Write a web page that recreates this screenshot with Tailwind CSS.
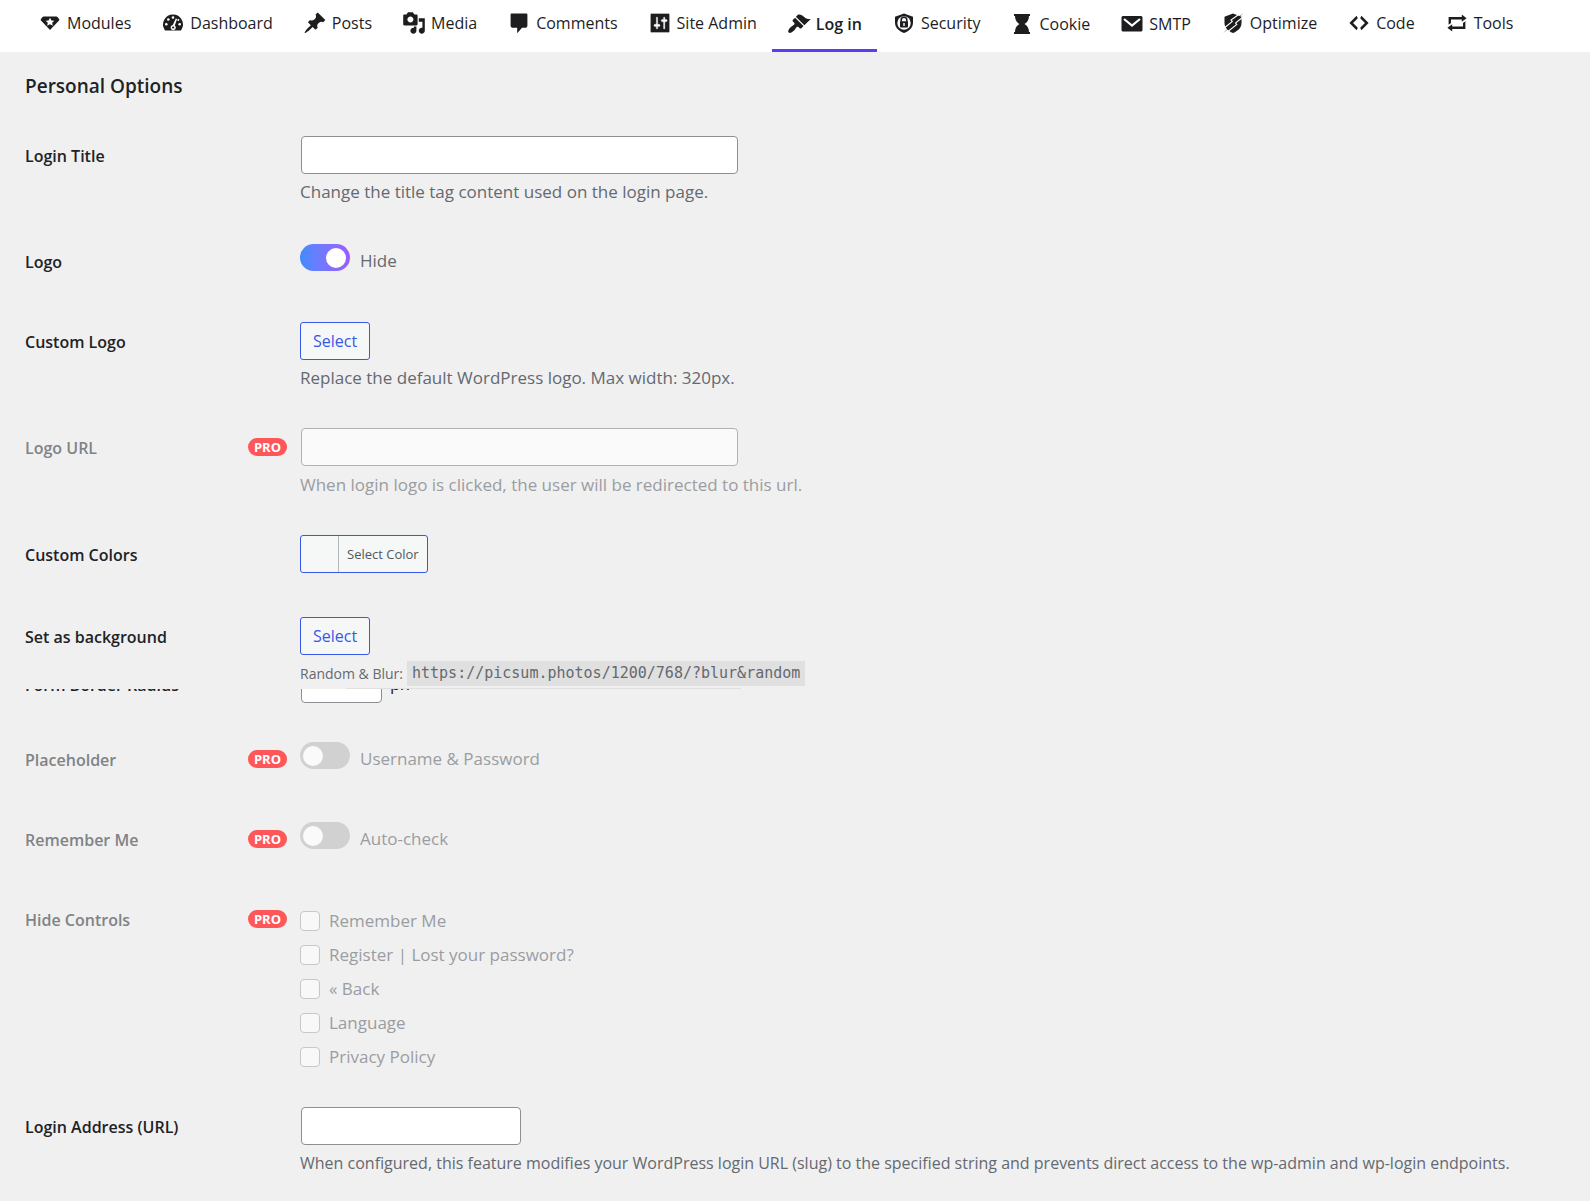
<!DOCTYPE html>
<html lang="en">
<head>
  <meta charset="UTF-8">
  <meta name="viewport" content="width=device-width, initial-scale=1">
  <title>Login Settings</title>
  <script src="https://cdn.jsdelivr.net/npm/@tailwindcss/browser@4"></script>
  <style>
    body { font-family: "Segoe UI", "Open Sans", "Noto Sans", sans-serif; }
    code { font-family: Consolas, "DejaVu Sans Mono", monospace; }
  </style>
</head>
<body class="min-h-screen bg-[#f0f0f0] text-[#1d2327]">

  <!-- Tabs -->
  <nav class="flex h-[52px] bg-white pl-[23px] text-base whitespace-nowrap text-[#1d1d1f]">
    <a href="#modules" class="flex items-center gap-[5px] px-[15px] pb-1.5">
      <svg class="size-6" viewBox="0 0 24 24" fill="currentColor" fill-rule="evenodd"><path d="M5.500 5.500h13q1.500 0 3 3.500L12 19 2.500 9q1.500-3.500 3-3.500zM12 6.800l-1.400 2.600-2.900.4 2.100 2-.6 2.900 2.800-1.400 2.800 1.400-.6-2.900 2.100-2-2.900-.4z"/></svg>
      Modules
    </a>
    <a href="#dashboard" class="flex items-center gap-[5px] px-[15px] pb-1.5">
      <svg class="size-6" viewBox="0 0 24 24" fill="currentColor"><path d="M12 3.500A10 10 0 0 0 3.700 19q.3.500 1 .5h14.600q.7 0 1-.5A10 10 0 0 0 12 3.500z"/><g fill="#fff"><circle cx="12" cy="6.500" r="1.300"/><circle cx="7.300" cy="8.500" r="1.300"/><circle cx="5.300" cy="13.300" r="1.300"/><circle cx="18.700" cy="13.300" r="1.300"/><circle cx="17.300" cy="9" r="1"/><path d="M14.800 7.500l1.300.5-2.300 6.500a2.600 2.600 0 1 1-2-.5z"/></g><circle cx="12.200" cy="16.500" r="1.100"/></svg>
      Dashboard
    </a>
    <a href="#posts" class="flex items-center gap-[5px] px-[15px] pb-1.5">
      <svg class="size-6" viewBox="0 0 20 20" fill="currentColor"><path d="M10.440 3.020l1.820-1.820 6.360 6.350-1.830 1.820c-1.050-.68-2.480-.57-3.410.36l-.75.75c-.92.93-1.040 2.350-.35 3.410l-1.830 1.820-2.410-2.410-2.800 2.790c-.42.42-3.380 2.710-3.800 2.290s1.860-3.390 2.280-3.810l2.790-2.790L4.100 9.360l1.830-1.820c1.050.69 2.480.57 3.400-.36l.75-.75c.93-.92 1.050-2.350.36-3.410z"/></svg>
      Posts
    </a>
    <a href="#media" class="flex items-center gap-[5px] px-[15px] pb-1.5">
      <svg class="size-6" viewBox="0 0 20 20" fill="currentColor"><path d="M13 11V4c0-.55-.45-1-1-1h-1.670L9 1H5L3.670 3H2c-.55 0-1 .45-1 1v7c0 .55.45 1 1 1h10c.55 0 1-.45 1-1zM7 4.500c1.380 0 2.500 1.120 2.500 2.500S8.380 9.500 7 9.500 4.500 8.380 4.500 7 5.620 4.500 7 4.500zM14 6h5v10.500c0 1.380-1.120 2.500-2.500 2.500S14 17.880 14 16.500s1.120-2.500 2.500-2.500c.17 0 .34.02.5.05V9h-3V6zm-4 8.050V13h2v3.500c0 1.380-1.120 2.500-2.500 2.500S7 17.880 7 16.500 8.120 14 9.500 14c.17 0 .34.02.5.05z"/></svg>
      Media
    </a>
    <a href="#comments" class="flex items-center gap-[5px] px-[15px] pb-1.5">
      <svg class="size-6" viewBox="0 0 20 20" fill="currentColor"><path d="M4 2h12c.55 0 1 .45 1 1v9c0 1.100-.9 2-2 2h-2.500l-4 4.500V14H5c-1.100 0-2-.9-2-2V3c0-.55.45-1 1-1z"/></svg>
      Comments
    </a>
    <a href="#site-admin" class="flex items-center gap-[5px] px-[15px] pb-1.5">
      <svg class="size-6" viewBox="0 0 20 20" fill="currentColor"><path d="M18 17V3c0-.55-.45-1-1-1H3c-.55 0-1 .45-1 1v14c0 .55.45 1 1 1h14c.55 0 1-.45 1-1zM8 11h1c.55 0 1 .45 1 1s-.45 1-1 1H8v1.500c0 .28-.22.5-.5.5s-.5-.22-.5-.5V13H6c-.55 0-1-.45-1-1s.45-1 1-1h1V5.500c0-.28.22-.5.5-.5s.5.22.5.5V11zm5-2h-1c-.55 0-1-.45-1-1s.45-1 1-1h1V5.500c0-.28.22-.5.5-.5s.5.22.5.5V7h1c.55 0 1 .45 1 1s-.45 1-1 1h-1v5.500c0 .28-.22.5-.5.5s-.5-.22-.5-.5V9z" stroke="#fff" stroke-width=".3"/></svg>
      Site Admin
    </a>
    <a href="#login" class="flex items-center gap-[5px] border-b-[3px] border-[#5b3df5] px-[15px] pb-px font-semibold">
      <svg class="size-6" viewBox="0 0 20 20" fill="currentColor"><path d="M14.480 11.060L7.410 3.990l1.500-1.500c.5-.56 2.300-.47 3.510.32 1.210.8 1.430 1.280 2.910 2.100 1.180.64 2.450 1.260 4.450.85zm-.71.71L6.700 4.700 4.930 6.470c-.39.39-.39 1.020 0 1.410l1.060 1.060c.39.39.39 1.030 0 1.420-.6.6-1.430 1.110-2.210 1.690-.35.26-.7.53-1.010.84C1.430 14.230.4 16.080 1.400 17.070c.99 1 2.840-.03 4.180-1.360.31-.31.58-.66.85-1.020.57-.78 1.080-1.610 1.690-2.210.39-.39 1.020-.39 1.410 0l1.060 1.060c.39.39 1.020.39 1.410 0z"/></svg>
      Log in
    </a>
    <a href="#security" class="flex items-center gap-[5px] px-[15px] pb-1.5">
      <svg class="size-6" viewBox="0 0 24 24" fill="currentColor"><path d="M12 2.500l9 3.200v5.800c0 5-3.600 8.500-9 10.500-5.400-2-9-5.500-9-10.500V5.700z"/><circle cx="12" cy="12" r="6.700" fill="#fff"/><path d="M9.200 10.500V9a2.800 2.800 0 0 1 5.600 0v1.500" fill="none" stroke="currentColor" stroke-width="1.600"/><path d="M8 10.300h8v5.200q0 1-1 1H9q-1 0-1-1z"/><path d="M11.300 12h1.400v3h-1.400z" fill="#fff"/></svg>
      Security
    </a>
    <a href="#cookie" class="flex items-center gap-[5px] px-[15px] pb-1">
      <svg class="size-6" viewBox="0 0 24 24" fill="currentColor"><path d="M4 2h16v2H4zM5 4h14c0 4-2 6.500-4.500 8 2.500 1.500 4.500 4 4.500 8H5c0-4 2-6.500 4.500-8C7 10.500 5 8 5 4zM4 20h16v2H4z"/></svg>
      Cookie
    </a>
    <a href="#smtp" class="flex items-center gap-[5px] px-[15px] pb-1">
      <svg class="size-6" viewBox="0 0 24 24"><rect x="1.500" y="4" width="21" height="15.500" rx="1.500" fill="currentColor"/><path d="M4 7l8 6.500L20 7" fill="none" stroke="#fff" stroke-width="2.200"/></svg>
      SMTP
    </a>
    <a href="#optimize" class="flex items-center gap-[5px] px-[15px] pb-1.5">
      <svg class="size-6" viewBox="0 0 24 24"><path d="M12 2.500l8.500 3.200v6c0 4.500-3 8-8.500 10.300-5.500-2.300-8.500-5.800-8.500-10.300v-6z" fill="currentColor"/><g fill="none" stroke="#fff" stroke-width="1.100"><path d="M19 2.500l-9 6.500 1.300 1.500L2 18"/><path d="M22 6l-7.500 6 1.300 1.500L5 22"/></g><path d="M22.500 2l-9.500 7.300 1.500 1.500L2 22l11-8.500-1.500-1.500z" fill="currentColor"/></svg>
      Optimize
    </a>
    <a href="#code" class="flex items-center gap-[5px] px-[15px] pb-1.5">
      <svg class="size-6" viewBox="0 0 20 20" fill="currentColor"><path d="M9 6l-4 4 4 4-1 2-6-6 6-6zm2 8l4-4-4-4 1-2 6 6-6 6z"/></svg>
      Code
    </a>
    <a href="#tools" class="flex items-center gap-[5px] px-[15px] pb-1.5">
      <svg class="size-6" viewBox="0 0 20 20" fill="currentColor"><path d="M5 7v3l-2 1.500V5h11V3l4 3.010L14 9V7H5zm10 6v-3l2-1.500V15H6v2l-4-3.010L6 11v2h9z"/></svg>
      Tools
    </a>
  </nav>

  <form class="text-[17px] leading-6">
    <section class="px-[25px] pt-5">
      <h2 class="mb-[36px] text-[19px] leading-7 font-semibold">Personal Options</h2>

      <div class="grid grid-cols-[275px_1fr] pb-[38px]">
        <label for="login-title" class="pt-2 text-base font-semibold">Login Title</label>
        <div>
          <input id="login-title" type="text" class="ml-px block h-[38px] w-[437px] rounded border border-[#8c8f94] bg-white px-2">
          <p class="mt-1.5 text-[#646970]">Change the title tag content used on the login page.</p>
        </div>
      </div>

      <div class="grid grid-cols-[275px_1fr] pb-[38px]">
        <label for="hide-logo" class="pt-2 text-base font-semibold">Logo</label>
        <div class="flex h-[42px] gap-2.5 pt-0.5">
          <input id="hide-logo" type="checkbox" checked class="h-[27px] w-[50px] appearance-none rounded-full bg-linear-to-r from-[#3d8bff] to-[#9a5cff] before:mt-[4px] before:ml-[26px] before:block before:size-5 before:rounded-full before:bg-white before:content-['']">
          <label for="hide-logo" class="pt-[5px] text-[#646970]">Hide</label>
        </div>
      </div>

      <div class="grid grid-cols-[275px_1fr] pb-[38px]">
        <span class="pt-2 text-base font-semibold">Custom Logo</span>
        <div>
          <button type="button" class="block h-[38px] rounded-[3px] border border-[#3858e9] bg-[#f6f7f7] px-3 text-base text-[#3858e9]">Select</button>
          <p class="mt-1.5 text-[#646970]">Replace the default WordPress logo. Max width: 320px.</p>
        </div>
      </div>

      <div class="grid grid-cols-[275px_1fr] pb-[38px]">
        <div class="flex justify-between pr-[13px]">
          <label for="logo-url" class="pt-2 text-base font-semibold text-[#808386]">Logo URL</label>
          <span class="mt-2.5 h-[18px] rounded-full bg-[#ff5757] px-1.5 text-[13px] leading-[18px] font-bold text-white">PRO</span>
        </div>
        <div>
          <input id="logo-url" type="text" disabled class="ml-px block h-[38px] w-[437px] rounded border border-[#b0b2b5] bg-[#fafafa] px-2">
          <p class="mt-[7px] text-[#9a9da1]">When login logo is clicked, the user will be redirected to this url.</p>
        </div>
      </div>

      <div class="grid grid-cols-[275px_1fr] pb-[38px]">
        <span class="pt-2 text-base font-semibold">Custom Colors</span>
        <div>
          <button type="button" class="mb-1.5 flex h-[38px] rounded-[3px] border border-[#3858e9] bg-[#f6f7f7] pl-[37px] text-[13px] text-[#50575e]">
            <span class="flex h-full items-center border-l border-[#b4b9be] px-2">Select Color</span>
          </button>
        </div>
      </div>

      <div class="grid grid-cols-[275px_1fr]">
        <span class="pt-2 text-base font-semibold">Set as background</span>
        <div>
          <button type="button" class="block h-[38px] rounded-[3px] border border-[#3858e9] bg-[#f6f7f7] px-3 text-base text-[#3858e9]">Select</button>
          <p class="mt-1.5 flex items-center gap-1 text-sm leading-[25px] text-[#646970]">Random &amp; Blur: <code class="bg-[#e0e0e0] px-[5px] text-[15px]">https://picsum.photos/1200/768/?blur&amp;random</code></p>
        </div>
      </div>
      <div class="mt-[2px] ml-[321px] h-px w-[395px] bg-[#dfdfe0]"></div>
    </section>

    <!-- Second panel, scrolled part of the way under the first -->
    <section class="overflow-hidden px-[25px]">
      <div class="-mt-[24px] grid grid-cols-[275px_1fr] pb-[37px]">
        <label for="radius" class="pt-2 text-base font-semibold">Form Border Radius</label>
        <div class="flex items-center gap-2">
          <input id="radius" type="text" class="ml-px h-[38px] w-[81px] rounded border border-[#8c8f94] bg-white px-2">
          <span>px</span>
        </div>
      </div>

      <div class="grid grid-cols-[275px_1fr] pb-[38px]">
        <div class="flex justify-between pr-[13px]">
          <label for="placeholder" class="pt-2 text-base font-semibold text-[#808386]">Placeholder</label>
          <span class="mt-2.5 h-[18px] rounded-full bg-[#ff5757] px-1.5 text-[13px] leading-[18px] font-bold text-white">PRO</span>
        </div>
        <div class="flex h-[42px] gap-2.5 pt-0.5">
          <input id="placeholder" type="checkbox" disabled class="h-[27px] w-[50px] appearance-none rounded-full bg-[#d1d1d2] before:mt-[4px] before:ml-[3px] before:block before:size-5 before:rounded-full before:bg-[#fafafa] before:content-['']">
          <label for="placeholder" class="pt-[5px] text-[#9a9da1]">Username &amp; Password</label>
        </div>
      </div>

      <div class="grid grid-cols-[275px_1fr] pb-[38px]">
        <div class="flex justify-between pr-[13px]">
          <label for="remember" class="pt-2 text-base font-semibold text-[#808386]">Remember Me</label>
          <span class="mt-2.5 h-[18px] rounded-full bg-[#ff5757] px-1.5 text-[13px] leading-[18px] font-bold text-white">PRO</span>
        </div>
        <div class="flex h-[42px] gap-2.5 pt-0.5">
          <input id="remember" type="checkbox" disabled class="h-[27px] w-[50px] appearance-none rounded-full bg-[#d1d1d2] before:mt-[4px] before:ml-[3px] before:block before:size-5 before:rounded-full before:bg-[#fafafa] before:content-['']">
          <label for="remember" class="pt-[5px] text-[#9a9da1]">Auto-check</label>
        </div>
      </div>

      <div class="grid grid-cols-[275px_1fr] pb-[38px]">
        <div class="flex items-start justify-between pr-[13px]">
          <span class="pt-2 text-base font-semibold text-[#808386]">Hide Controls</span>
          <span class="mt-2.5 h-[18px] rounded-full bg-[#ff5757] px-1.5 text-[13px] leading-[18px] font-bold text-white">PRO</span>
        </div>
        <div class="flex flex-col items-start gap-2.5 pt-[9px] text-[#9a9da1]">
          <label class="flex items-center gap-[9px]"><input type="checkbox" disabled class="size-5 appearance-none rounded border border-[#c6c7c9] bg-[#f8f8f8]">Remember Me</label>
          <label class="flex items-center gap-[9px]"><input type="checkbox" disabled class="size-5 appearance-none rounded border border-[#c6c7c9] bg-[#f8f8f8]">Register | Lost your password?</label>
          <label class="flex items-center gap-[9px]"><input type="checkbox" disabled class="size-5 appearance-none rounded border border-[#c6c7c9] bg-[#f8f8f8]">« Back</label>
          <label class="flex items-center gap-[9px]"><input type="checkbox" disabled class="size-5 appearance-none rounded border border-[#c6c7c9] bg-[#f8f8f8]">Language</label>
          <label class="flex items-center gap-[9px]"><input type="checkbox" disabled class="size-5 appearance-none rounded border border-[#c6c7c9] bg-[#f8f8f8]">Privacy Policy</label>
        </div>
      </div>

      <div class="grid grid-cols-[275px_1fr]">
        <label for="login-address" class="pt-2 text-base font-semibold">Login Address (URL)</label>
        <div>
          <input id="login-address" type="text" class="ml-px block h-[38px] w-[220px] rounded border border-[#8c8f94] bg-white px-2">
          <p class="mt-1.5 text-base leading-6 text-[#646970]">When configured, this feature modifies your WordPress login URL (slug) to the specified string and prevents direct access to the wp-admin and wp-login endpoints.</p>
        </div>
      </div>
    </section>
  </form>

</body>
</html>
